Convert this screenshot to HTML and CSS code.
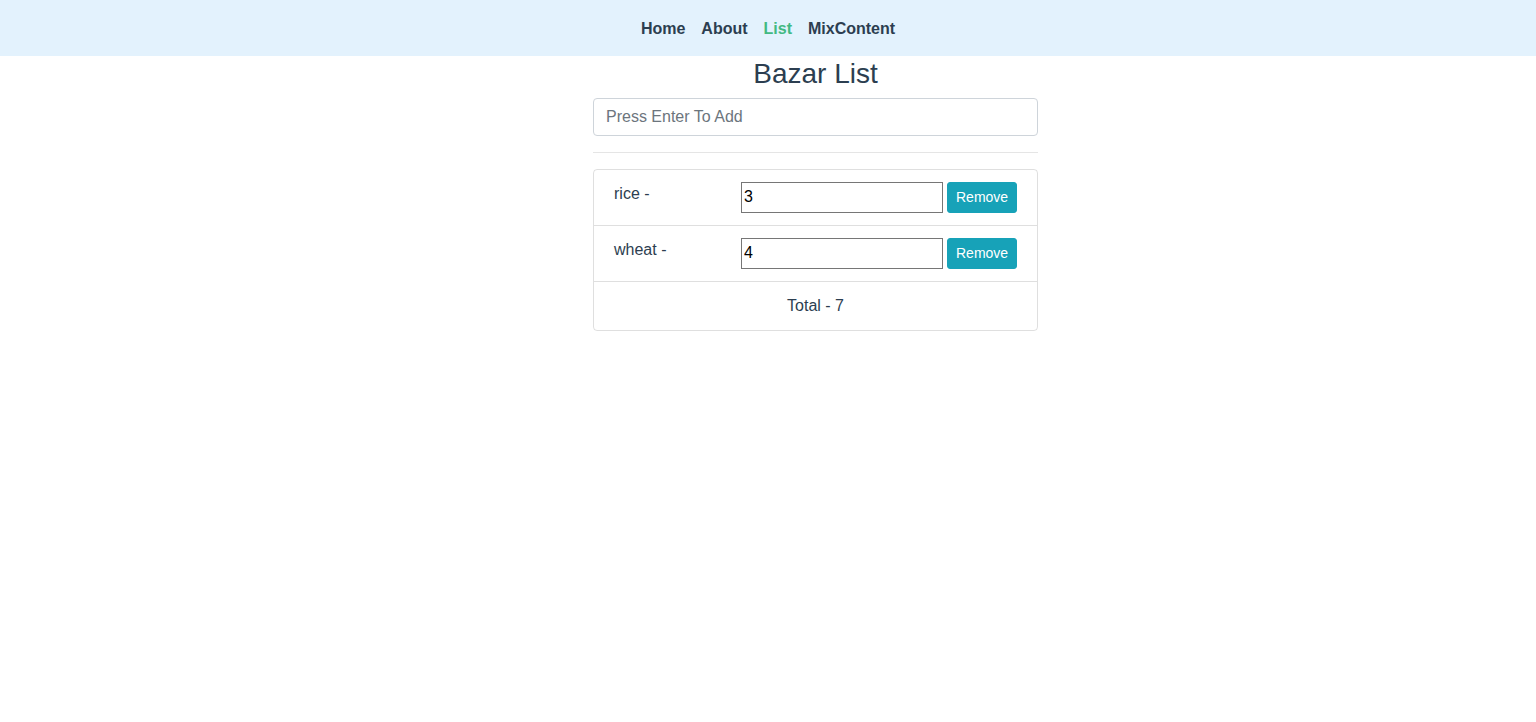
FILE: index.html
```html
<!DOCTYPE html>
<html lang="en">
<head>
<meta charset="utf-8">
<title>Bazar List</title>
<link rel="stylesheet" href="styles.css">
</head>
<body>
<div class="app">
  <nav class="nav">
    <a href="#" class="nav-link">Home</a>
    <a href="#" class="nav-link">About</a>
    <a href="#" class="nav-link active">List</a>
    <a href="#" class="nav-link">MixContent</a>
  </nav>
  <div class="container">
    <div class="col">
      <h3 class="title">Bazar List</h3>
      <input class="form-control" type="text" placeholder="Press Enter To Add">
      <hr class="divider">
      <ul class="list-group">
        <li class="list-item">
          <span class="item-name">rice -</span>
          <input class="qty" type="text" value="3">
          <button class="btn-remove">Remove</button>
        </li>
        <li class="list-item">
          <span class="item-name">wheat -</span>
          <input class="qty" type="text" value="4">
          <button class="btn-remove">Remove</button>
        </li>
        <li class="list-item total">Total - 7</li>
      </ul>
    </div>
  </div>
</div>
</body>
</html>
```

FILE: styles.css
```css
* { box-sizing: border-box; }
html, body { margin: 0; padding: 0; background: #fff; }
body {
  font-family: "Liberation Sans", Arial, Helvetica, sans-serif;
  font-size: 16px;
  line-height: 1.5;
  color: #2c3e50;
}
.app { text-align: center; }
.nav {
  height: 56px;
  padding-top: 2px;
  background: #e3f2fd;
  display: flex;
  justify-content: center;
  align-items: center;
  gap: 16px;
}
.nav-link {
  font-weight: bold;
  color: #2c3e50;
  text-decoration: none;
  font-size: 16px;
}
.nav-link.active { color: #42b983; }
.container {
  width: 1140px;
  margin: 0 auto;
  display: grid;
  grid-template-columns: repeat(12, 1fr);
}
.col {
  grid-column: 5 / span 5;
  padding: 0 15px;
}
.title {
  margin: 1px 0 7px;
  font-size: 28px;
  font-weight: 500;
  line-height: 1.2;
  color: #2c3e50;
}
.form-control {
  display: block;
  width: 100%;
  height: 38px;
  padding: 6px 12px;
  font-family: inherit;
  font-size: 16px;
  line-height: 1.5;
  color: #495057;
  background: #fff;
  border: 1px solid #ced4da;
  border-radius: 4px;
  outline: none;
}
.form-control::placeholder { color: #6c757d; opacity: 1; }
.divider {
  margin: 16px 0;
  border: 0;
  border-top: 1px solid rgba(0,0,0,.1);
}
.list-group {
  list-style: none;
  margin: 0;
  padding: 0;
  border: 1px solid rgba(0,0,0,.125);
  border-radius: 4px;
}
.list-item {
  display: flex;
  align-items: flex-start;
  padding: 12px 20px;
  border-bottom: 1px solid rgba(0,0,0,.125);
  text-align: left;
}
.list-item:last-child { border-bottom: 0; }
.item-name {
  width: 127px;
  flex: none;
  line-height: 24px;
}
.qty {
  width: 202px;
  height: 31px;
  padding: 1px 2px;
  font-family: inherit;
  font-size: 16px;
  color: #000;
  border: 1px solid #767676;
  border-radius: 0;
  margin: 0 4px 0 0;
  outline: none;
}
.btn-remove {
  width: 70px;
  height: 31px;
  padding: 4px 8px;
  font-family: inherit;
  font-size: 14px;
  line-height: 1.5;
  color: #fff;
  background: #17a2b8;
  border: 1px solid #17a2b8;
  border-radius: 3px;
}
.list-item.total {
  justify-content: center;
  line-height: 24px;
}
```
